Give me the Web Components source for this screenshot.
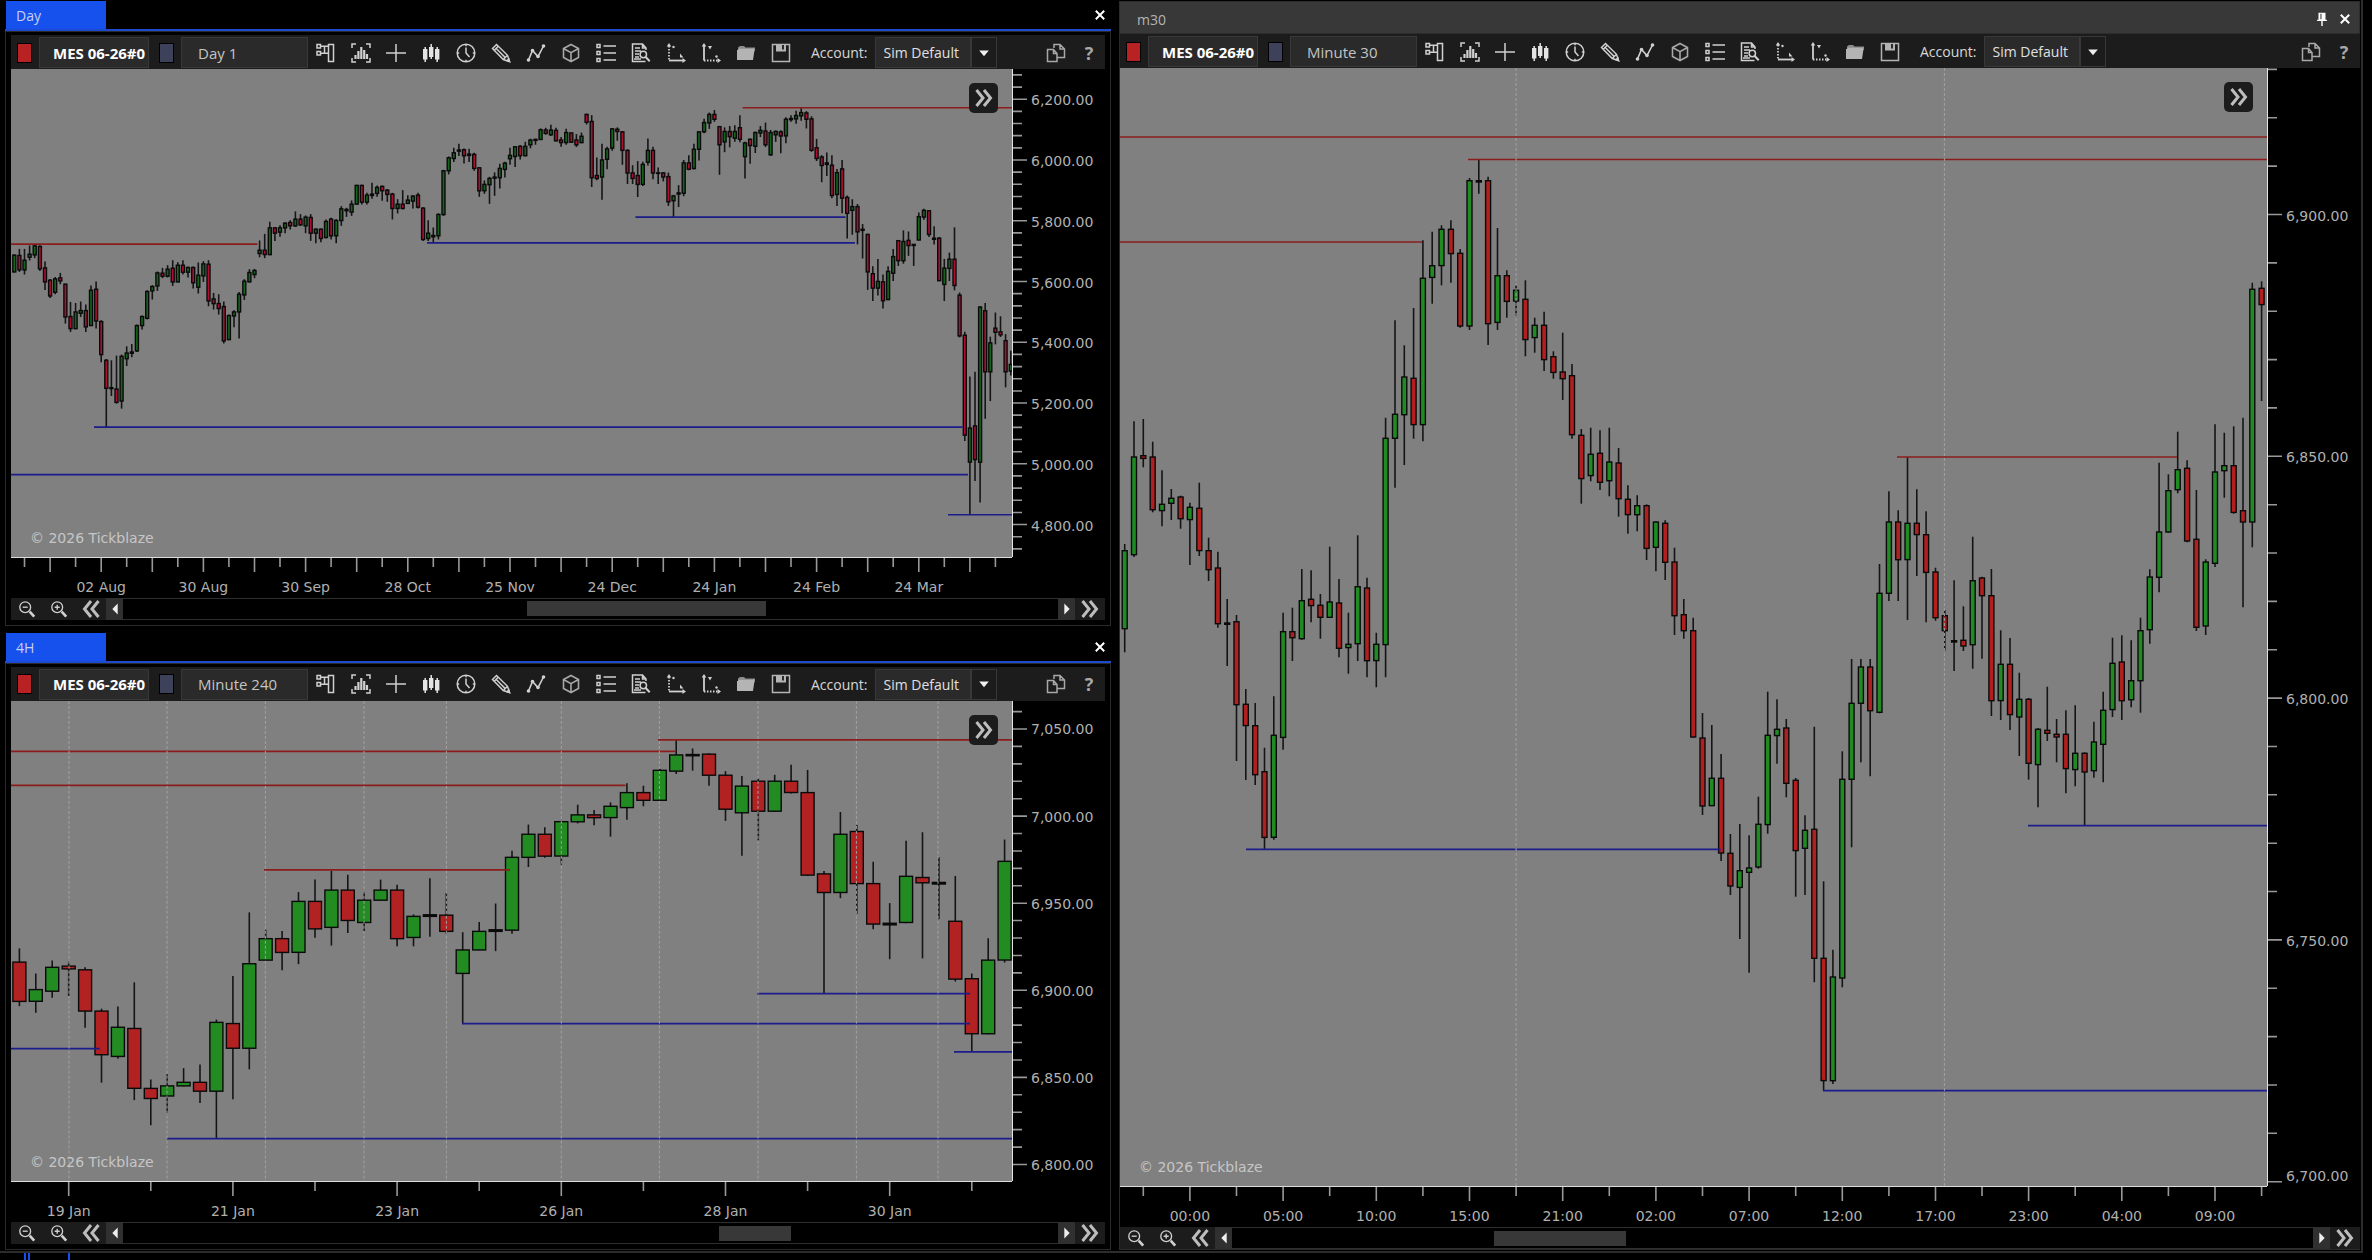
<!DOCTYPE html>
<html lang="en">
<head>
<meta charset="utf-8">
<title>Trading workspace</title>
<style>
html,body{margin:0;height:100%;background:#000;overflow:hidden}
body{font-family:"Open Sans","Noto Sans",sans-serif;color:#d8d8d8}
</style>
</head>
<body>
<trade-workspace>
  <chart-panel slot="left" style="flex-grow:625" variant="tab" heading="Day" period="Day 1" series="day" thumb="239" position="580"></chart-panel>
  <chart-panel slot="left" style="flex-grow:618" variant="tab" heading="4H" period="Minute 240" series="h4" thumb="72" position="691"></chart-panel>
  <chart-panel slot="right" style="flex-grow:1" variant="window" heading="m30" period="Minute 30" series="m30" thumb="132" position="276"></chart-panel>
</trade-workspace>

<script>
const SERIES = {
  day: {
    view: [11, 69, 1001, 487], x0: 14.3, step: 5.11, body: 3, up: '#14641c', down: '#ab0f32',
    runs: [
      [60, 3, `g582,585,635,637 r566,586,629,635 g566,600,629,643 g556,582,591,601 g553,557,584,594 r555,559,626,632 r604,623,665,689 r656,660,707,713 g650,656,696,702 r638,653,662,672
r670,672,770,790 r725,769,805,815 g728,755,805,806 g724,751,759,770 r733,751,800,815 g676,690,796,797 r664,687,782,805 r780,784,883,906 r896,900,984,1100 k900,982,985,1007
r886,986,1026,1030 g883,888,1022,1045 g858,878,895,917 k851,875,879,891 g793,796,872,875 g766,769,796,808 g690,694,774,778 g675,679,692,718 g634,638,677,692 r623,639,648,654
g615,627,648,652 r600,624,665,677 g606,615,665,666 r600,615,636,643 g619,622,636,652 r619,622,668,685 g607,645,681,700 g603,611,647,665 r600,612,722,738 r698,716,730,748
r702,730,745,763 r724,739,842,850 g763,766,838,840 g750,755,767,801 g695,702,755,835 g657,663,704,719 g627,637,665,667 g626,631,643,654 g541,570,580,591 r521,570,583,594
g485,503,583,585 r501,503,519,542 g495,503,516,530 g486,489,503,519 r480,487,497,508 g454,477,497,500 r462,477,494,497 g466,471,497,519 r462,472,519,542 g505,507,519,549
r505,507,535,546 g478,484,532,535 r473,477,527,538 g477,481,527,549 g438,446,481,497 k443,448,452,470 g421,432,456,467 g374,376,432,433 r374,376,426,433 g398,405,426,433
k368,402,406,416 g376,382,400,410 r376,379,392,422 r387,390,403,425 r398,402,445,478 g417,432,445,460 r390,432,445,448 g405,420,430,431 g405,408,423,445 r398,405,441,445
r441,444,538,542 g480,519,535,542 k502,526,530,549 g460,463,527,538 g329,332,463,467 g289,293,332,343 g263,278,295,306 k251,270,273,288 r265,269,287,310 k266,282,286,306
r278,283,325,332 r321,323,392,410 g361,373,392,401 g350,355,374,431 k337,351,354,407 g311,325,353,385 g305,309,328,352 g263,286,296,314 g258,260,289,321 r255,259,287,298
g245,259,287,289 g236,240,254,265 k236,238,241,254 g205,209,238,240 r203,210,220,224 g194,210,224,228`],
      [60, 2.703, `r183,190,218,220 r208,216,223,234 g186,196,223,229 r196,197,222,224 r200,216,229,235 g196,206,223,225 r145,147,168,174 r149,166,318,343 r263,312,320,325 g226,270,316,377
g234,240,268,295 g184,186,238,245 r182,187,193,218 r192,194,244,283 r241,244,305,335 r284,305,320,335 r273,312,336,370 g275,282,336,340 g212,244,276,285 r234,244,305,322
k290,305,306,335 r303,305,316,328 r304,315,383,394 g364,367,380,424 k338,359,362,397 g270,278,360,368 r257,278,295,298 g226,241,293,296 g192,194,241,271 g159,169,194,198
g142,147,170,186 r135,147,160,167 r178,180,229,310 g182,193,221,249 r178,193,207,236 g176,193,211,221 r149,183,214,222 g221,224,261,320 r212,214,231,280 g193,196,233,251
g178,190,197,208 r169,192,229,235 g189,196,256,259 g190,193,202,221 r190,194,205,252 g155,160,205,225 k149,158,161,167 g137,150,159,172 g130,142,151,164 r138,143,160,185
r152,159,244,248 r213,237,266,273 r257,262,285,330 k250,278,282,313 r257,284,366,373 g294,304,363,394 r270,294,373,414 r366,371,414,482 g376,396,406,472 r389,396,464,498
k443,457,460,536 r469,471,572,621 r557,577,616,651 g537,598,616,636 r579,599,650,671 g557,571,647,649 g510,531,576,597 r486,488,542,556 g460,490,542,550 r463,487,501,529
k497,498,501,556 g412,423,486,487 g402,406,424,431 r405,407,471,478 k449,481,484,498 r478,481,596,597 g537,562,606,651 g520,538,563,597 r452,538,609,622 r628,635,745,749
r734,743,1013,1029 g855,994,1086,1228 r842,988,1079,1137 g665,667,1086,1195 r656,677,842,969 g747,764,842,921 r682,724,735,768 r692,734,742,748 r740,758,842,884 g785,822,840,852`]
    ],
    levels: [['r',11,257.5,244],['r',742.6,1012,107.7],['b',94,962.5,426.7],['b',11,968,474.3],['b',427,855,242.7],['b',635.4,845.5,216.9],['b',948,1012,514.3]],
    sessions: [],
    price: { first: 99.2, step: 60.7, minor: 12.14, labels: ['6,200.00','6,000.00','5,800.00','5,600.00','5,400.00','5,200.00','5,000.00','4,800.00'] },
    time: { every: 5, from: 2, longAt: 1, labelFrom: 17, labelEvery: 20, labels: ['02 Aug','30 Aug','30 Sep','28 Oct','25 Nov','24 Dec','24 Jan','24 Feb','24 Mar'] }
  },
  h4: {
    view: [11, 701, 1001, 481], x0: 19.4, step: 16.42, body: 13, up: '#228b22', down: '#b22222',
    runs: [[625, 2.469, `r799,833,930,942 g861,901,930,958 g829,846,905,921 r831,843,850,917 r846,852,954,995 r948,954,1062,1131 g943,994,1066,1072 r883,997,1145,1174 r1123,1145,1170,1236 g1110,1139,1164,1206
g1095,1130,1139,1140 r1086,1130,1152,1181 g975,982,1152,1270 r867,985,1046,1172 g710,837,1046,1098 g753,775,828,830 r756,775,809,853 g660,683,809,838 r629,683,751,773 g607,655,747,792
r617,655,730,761 g659,680,735,757 g629,655,680,682 r642,655,775,794 g715,720,772,794 k626,716,720,770 r661,717,757,763 g759,803,861,985 g734,757,803,804 k688,753,757,806
g558,574,754,763 g493,517,574,598 r500,517,571,575 g484,486,571,592 g444,469,486,490 r457,469,476,495 g438,448,476,523 g391,414,451,481 r397,414,433,448 g355,359,433,435
g284,321,361,368 k305,320,323,360 r317,319,371,397 r361,371,455,484 g373,398,464,570 r379,386,460,532 g370,386,460,462 r345,386,414,416 r358,414,618,620 r608,615,661,911
g462,517,661,675 r494,510,639,714 r585,639,739,752 k687,737,741,826 g533,621,735,737 r512,624,637,824 k574,636,640,727 r620,732,875,881 r861,874,1010,1055 g774,828,1010,1011
g530,584,828,834`]],
    levels: [['r',11,675.5,751.4],['r',11,625.5,785.4],['r',264,510,870],['r',658,1012,740],['b',11,100,1049],['b',167,1012,1139],['b',462,970,1024],['b',757,970,994],['b',954,1012,1052.3]],
    sessions: [69,167,265.4,364,446.4,561.3,659.4,758,856.4,938],
    price: { first: 729, step: 87.2, minor: 17.44, labels: ['7,050.00','7,000.00','6,950.00','6,900.00','6,850.00','6,800.00'] },
    time: { every: 5, from: 3, longAt: 0, labelFrom: 3, labelEvery: 10, labels: ['19 Jan','21 Jan','23 Jan','26 Jan','28 Jan','30 Jan'] }
  },
  m30: {
    view: [1120, 68, 1147, 1118], x0: 1124.7, step: 9.319, body: 5, up: '#1f8b22', down: '#b21f1f',
    runs: [[420, 3, `g372,392,626,697 g4,111,404,411 r-3,107,115,142 r65,111,269,277 g151,253,272,319 g207,235,250,300 r227,231,296,326 g248,262,299,435 r188,265,392,408 r353,392,449,483
r395,444,611,623 k537,609,613,738 r585,605,854,1023 r807,853,917,1080 r849,917,1064,1095 r983,1055,1252,1288 g829,946,1252,1259 g578,635,952,989 r563,635,653,723 g447,542,656,659
r451,538,557,607 r522,556,592,656 g380,546,592,594 r477,549,685,712 g578,673,683,761 g346,500,671,723 r473,504,722,772 g638,673,722,802 g-7,55,674,772 g-299,-17,55,203
g-224,-129,-16,135 r-336,-125,14,56 g-539,-425,14,64 g-565,-463,-428,-349 g-584,-572,-463,-404 r-599,-572,-499,-412 r-513,-500,-282,-277 g-726,-718,-282,-270 k-780,-718,-714,-679 r-730,-718,-289,-225
g-576,-433,-293,-270 r-449,-433,-356,-307 g-404,-389,-357,-312 r-419,-362,-241,-191 g-307,-284,-247,-202 r-325,-284,-181,-147 r-206,-190,-143,-124 r-262,-144,-124,-60 r-168,-133,44,56 r27,46,176,251
g23,103,167,184 r31,100,187,210 g23,126,182,229 r84,129,236,290 r196,238,284,341 g226,257,284,334 r253,257,385,420 g304,306,382,454 r301,310,427,480 r383,426,587,645
r537,584,632,656 r593,632,951,953 r879,954,1158,1185 g915,1075,1157,1159 r1002,1075,1299,1323 r1242,1300,1398,1425 g1212,1352,1402,1557 g1246,1344,1357,1658 g1130,1213,1341,1346 g815,946,1214,1241
g838,928,947,1031 r897,924,1090,1132 r1074,1081,1292,1430 g1186,1231,1285,1425 r920,1228,1615,1687 r1384,1615,1982,2012 g1589,1671,1982,1992 g994,1078,1674,1702 g717,850,1078,1282 g717,741,850,1027
r717,741,872,1069 g432,520,877,880 g214,306,520,543 r271,306,419,543 g112,310,419,600 r208,310,344,468 r274,344,457,607 r443,456,593,602 r570,587,632,692 k481,662,666,753
r559,661,678,693 g350,482,674,746 r470,474,527,716 r447,527,842,888 g631,733,842,900 r654,733,884,930 g758,838,891,1008 r834,838,1030,1079 g924,928,1034,1162 r800,931,940,963
r897,943,951,1027 r871,943,1046,1120 g856,1000,1049,1099 r997,1000,1056,1217 g905,966,1052,1073 g815,871,973,1087 g653,730,869,891 r646,726,842,900 g661,782,839,862 g593,632,782,878
g448,471,629,671 g128,336,472,517 g163,212,336,338 g35,149,209,220 r121,145,363,367 r210,358,622,633 g418,426,618,645 g13,156,430,441 g38,137,152,233 r19,137,277,281
r-7,272,306,562 g-412,-392,306,382 r-416,-395,-346,-57`]],
    levels: [['r',1120,2267,137],['r',1468,2267,159.5],['r',1120,1422,242],['r',1897,2177,457],['b',1246,1720.6,849.3],['b',2028,2267,825.7],['b',1823,2267,1090.7]],
    sessions: [1516.1,1944.4],
    price: { first: 214.5, step: 241.8, minor: 48.36, labels: ['6,900.00','6,850.00','6,800.00','6,750.00','6,700.00'] },
    time: { every: 5, from: 2, longAt: 1, labelFrom: 7, labelEvery: 10, labels: ['00:00','05:00','10:00','15:00','21:00','02:00','07:00','12:00','17:00','23:00','04:00','09:00'] }
  }
};

const ICONS = {
  panel: '<path d="M12.500 1.500h5v17h-5zM1 1.500h3.500V5H1zM1 8.500h3.500V12H1zM4.500 3.200h8M4.500 10.200h8M8.500 3.200v7"/>',
  frame: '<path d="M1 5V1h4M15 1h4v4M19 15v4h-4M5 19H1v-4"/><path stroke-width="2.200" d="M4.500 16v-4M7.400 16V8M10.300 16V4M13.200 16V7M16 16v-5"/>',
  cross: '<path d="M10 1v18M0 10h20"/>',
  candles: '<path fill="#e4e4e4" stroke="none" d="M2 6h4.400v10.500H2zM8 4h4.400v10H8zM14 6h4.400v10.500H14z"/><path stroke="#e4e4e4" d="M4.200 4v15M10.200 1v15M16.200 4v15"/>',
  clock: '<circle cx="10" cy="10" r="8.800"/><path d="M10 4.500V10l3.500 4M10 1.200v2M10 16.800v2M1.200 10h2M16.800 10h2"/>',
  pencil: '<path d="M1.500 5.500 5.500 1.500 16.500 12.300 18.500 18.500 12.300 16.500zM3.200 7.200 7.200 3.200M5 5.200 14.300 14.600M12.300 16.500l4.200-4.200"/><path fill="#d0d0d0" d="m16 17.700 1.800-1.800.7 2.600z"/>',
  zigzag: '<path stroke-width="1.600" d="M2.500 17 6.500 7.500 12 13.500 17.500 3"/><g fill="#d0d0d0" stroke="none"><circle cx="2.500" cy="17" r="1.800"/><circle cx="6.500" cy="7.500" r="1.800"/><circle cx="12" cy="13.500" r="1.800"/><circle cx="17.500" cy="3" r="1.800"/></g>',
  cube: '<path stroke="#a8a8a8" stroke-width="1.600" d="M10 1.500 17.500 5.500v9L10 18.500 2.500 14.500v-9zM2.500 5.500 10 9.700l7.500-4.200M10 9.700v8.800"/>',
  list: '<path d="M1 1.500h3V4.500H1zM1 8.500h3v3H1zM1 15.500h3v3H1zM7.500 3H20M7.500 10H20M7.500 17H20"/>',
  report: '<path d="M15 7V5L11.500 1H1.500v17.500h13M11.500 1v4H15M4 5h5M4 8h6M4 11h4M4 14h4M3 16h7"/><circle cx="12.300" cy="11.500" r="3.200"/><path stroke-width="2" d="m14.700 14 4 4.300"/>',
  axisx: '<path stroke-width="1.800" stroke-dasharray="1.500 1.500" d="M3 3v14"/><path stroke-width="1.800" d="M3 17.500h15"/><g fill="#d0d0d0" stroke="none"><path d="M3 0l2.300 3.500H.700zM20 17.500 16.500 20v-5zM14 10.500l3.500 4h-3.500z"/><circle cx="7.500" cy="4" r="1.200"/></g>',
  axisy: '<path stroke-width="1.800" d="M3 3v14.500"/><path stroke-width="1.800" stroke-dasharray="1.500 1.500" d="M3 17.500h14"/><g fill="#d0d0d0" stroke="none"><path d="M3 0l2.300 3.500H.700zM20 17.500 16.500 20v-5zM7 3h4L9 6.500z"/><circle cx="15.500" cy="13.500" r="1.200"/></g>',
  folder: '<path fill="#8c8c8c" stroke="none" d="M2 4.500 4 3h4l1.500 1.500H19V8H2z"/><path fill="#b4b4b4" stroke="none" d="M1 7h17.500L17 17H1zM3 5.800h14l1-.8v2H2z"/>',
  save: '<path stroke="#b4b4b4" d="M1.500 1.500h17v17h-17z"/><path fill="#b4b4b4" stroke="none" d="M5 1h10v7.500H5z"/><path stroke="#2a2a2a" stroke-width="2" d="M12 2v4.500"/>',
  copy: '<path stroke="#a8a8a8" stroke-width="1.500" d="M8 5V1.500h6L18.500 6v8.500H11M14 1.500V6h4.500M1.500 6.500h6l3.500 4v8H1.500zM7.500 6.500v4H11"/>',
  zoomout: '<circle cx="8" cy="8" r="6"/><path d="M5.200 8h5.600"/><path stroke-width="3" d="m13 13 5 5.500"/>',
  zoomin: '<circle cx="8" cy="8" r="6"/><path d="M5.200 8h5.600M8 5.200v5.600"/><path stroke-width="3" d="m13 13 5 5.500"/>',
  forward: '<path stroke="#bdbdbd" stroke-width="3" d="m2.500 2 6.500 8-6.500 8M10 2l6.500 8-6.500 8"/>',
  back: '<path stroke="#bdbdbd" stroke-width="3" d="m17.500 2-6.500 8 6.500 8M10 2l-6.500 8 6.500 8"/>',
  left: '<path fill="#eee" stroke="none" d="M13 4v12l-6-6z"/>',
  right: '<path fill="#eee" stroke="none" d="M7 4v12l6-6z"/>',
  down: '<path fill="#eee" stroke="none" d="M4 7h12l-6 7z"/>',
  close: '<path stroke="#fff" stroke-width="2.800" d="m4 4 12 12M16 4 4 16"/>',
  pin: '<path fill="#fff" stroke="none" d="M5 1h10v10h2v2h-6v7H9v-7H3v-2h2z"/><path stroke="#383838" d="M8.500 2.500v8"/>'
};

class UiIcon extends HTMLElement {
  connectedCallback() {
    this.attachShadow({ mode: 'open' }).innerHTML = `
      <style>:host{display:block;width:20px;height:20px;flex:none}svg{display:block;width:100%;height:100%;fill:none;stroke:#d0d0d0;stroke-width:1.500}</style>
      <svg viewBox="0 0 20 20" aria-hidden="true">${ICONS[this.getAttribute('name')]}</svg>`;
  }
}

class ChartToolbar extends HTMLElement {
  connectedCallback() {
    const tools = ['panel','frame','cross','candles','clock','pencil','zigzag','cube','list','report','axisx','axisy','folder','save'];
    this.attachShadow({ mode: 'open' }).innerHTML = `
      <style>
        :host{display:flex;align-items:center;height:34px;background:#1c1c1c;flex:none;padding:1px 0 0 6px;box-sizing:border-box}
        *{box-sizing:border-box}
        button{background:none;border:0;padding:0;margin:0;display:flex;align-items:center;justify-content:center;height:32px;width:35px;font:inherit;color:inherit}
        .swatch{width:15px;height:20px;border:1px solid #000;margin-right:7px}
        .red{background:#b82222}.blue{background:#3d415a}
        input{font:15px "Open Sans",sans-serif;height:31px;border:1px solid #383838;background:#2a2a2a;color:#c4c4c4;padding:0 0 0 16px;margin:0;width:127px;outline:0}
        input.symbol{width:110px;padding-left:13px;font-weight:700;color:#fff;margin-right:10px}
        label{font-size:14px;color:#d8d8d8;margin:0 7px 0 13px}
        .combo{display:flex;align-items:center;border:1px solid #383838;height:31px;width:122px;background:#2a2a2a}
        select{appearance:none;border:0;background:none;color:#e0e0e0;font:14px "Open Sans",sans-serif;padding:0 0 0 8px;margin:0;flex:1;height:29px;min-width:0;outline:0}
        .arrow{width:26px;height:29px;background:#1c1c1c;border-left:2px solid #383838;display:flex;align-items:center;justify-content:center}
        .arrow ui-icon{width:16px;height:16px}
        .end{margin-left:auto;display:flex}
        .help{width:32px;font-weight:700;font-size:18px;color:#a8a8a8}
      </style>
      <button class="swatch red" aria-label="Symbol link colour"></button>
      <input class="symbol" value="MES 06-26#0" aria-label="Symbol">
      <button class="swatch blue" aria-label="Interval link colour"></button>
      <input value="${this.getAttribute('period')}" aria-label="Interval">
      ${tools.map(t => `<button aria-label="${t}"><ui-icon name="${t}"></ui-icon></button>`).join('')}
      <label for="account">Account:</label>
      <span class="combo"><select id="account"><option>Sim Default</option></select><span class="arrow"><ui-icon name="down"></ui-icon></span></span>
      <span class="end"><button aria-label="Duplicate"><ui-icon name="copy"></ui-icon></button><button class="help">?</button></span>`;
  }
}

class PriceChart extends HTMLElement {
  connectedCallback() {
    const s = SERIES[this.getAttribute('series')];
    const [vx, vy, vw, vh] = s.view;
    const f = n => n.toFixed(1);
    const ink = { g: s.up, r: s.down, k: '#000' };
    let i = 0, bars = '';
    for (const [top, scale, text] of s.runs) {
      for (const item of text.trim().split(/\s+/)) {
        const x = s.x0 + s.step * i++;
        const [h, t, b, l] = item.slice(1).split(',').map(v => top + v / scale);
        bars += `<path class="w" d="M${f(x)} ${f(h)}V${f(l)}"/><rect x="${f(x - s.body / 2)}" y="${f(t)}" width="${s.body}" height="${f(Math.max(b - t, 0.5))}" fill="${ink[item[0]]}"/>`;
      }
    }
    const lines = s.levels.map(([c, a, b, y]) => `<path class="${c}" d="M${a} ${y}H${b}"/>`).join('');
    const sessions = s.sessions.map(x => `<path class="s" d="M${x} ${vy}V${vy + vh}"/>`).join('');

    let priceTicks = '';
    const up = Math.floor((s.price.first - vy) / s.price.minor);
    for (let n = -up; ; n++) {
      const y = s.price.first + n * s.price.minor;
      if (y > vy + vh) break;
      priceTicks += `M0 ${f(y)}h${n % 5 === 0 ? 14 : 9}`;
    }
    let timeTicks = '';
    for (let n = 0, k = s.time.from; k < i; n++, k += s.time.every) {
      timeTicks += `M${f(s.x0 + s.step * k)} 0v${n % 2 === s.time.longAt ? 14 : 9}`;
    }
    const tracks = (positions, size, total) => {
      let out = '', at = 0;
      for (const p of positions) {
        out += `minmax(0,${f(Math.max(p - size / 2 - at, 0))}fr) ${size}px `;
        at = Math.max(at, p - size / 2) + size;
      }
      return out + `minmax(0,${f(Math.max(total - at, 0))}fr)`;
    };
    const py = s.price.labels.map((_, n) => Math.min(s.price.first + n * s.price.step - vy + 1, vh - 10));
    const px = s.time.labels.map((_, n) => s.x0 + s.step * (s.time.labelFrom + n * s.time.labelEvery) - vx);
    const spans = (list, axis) => list.map((t, n) => `<span style="grid-${axis}:${n * 2 + 2}">${t}</span>`).join('');

    this.attachShadow({ mode: 'open' }).innerHTML = `
      <style>
        :host{display:grid;grid-template-columns:minmax(0,1fr) 93px;grid-template-rows:minmax(0,1fr) 41px;flex:1;min-height:0;font:14px/20px "DejaVu Sans",sans-serif;color:#b0b0b0;background:#000}
        .plot{position:relative;background:#808080;min-height:0;overflow:hidden}
        svg{display:block}
        .plot svg{width:100%;height:100%}
        .plot rect{stroke:#0a0a0a;stroke-width:1.400}
        .w{stroke:#151515;stroke-width:1.600}
        .r{stroke:#8b1c1c;stroke-width:1.700}
        .b{stroke:#1c1c8b;stroke-width:1.700}
        .s{stroke:#a2a2a2;stroke-width:1;stroke-dasharray:3 2}
        .mark{position:absolute;left:19px;bottom:9px;color:#c6c6c6}
        .jump{position:absolute;right:14px;top:14px;width:29px;height:30px;border:0;border-radius:5px;background:#1c1c1c;padding:0;display:flex;align-items:center;justify-content:center}
        .price{display:flex;gap:4px;border-left:2px solid #e4e4e4;min-height:0;margin-left:-1px}
        .price svg{width:14px;height:100%;flex:none}
        .tick{stroke:#989898;stroke-width:1.600;fill:none}
        .ylabels{display:grid;grid-template-rows:${tracks(py, 20, vh)}}
        .time{border-top:2px solid #dcdcdc;margin-top:-1px}
        .time svg{width:100%;height:14px}
        .xlabels{display:grid;grid-template-columns:${tracks(px, 64, vw)};text-align:center;margin-top:5px}
        span{white-space:nowrap}
      </style>
      <div class="plot">
        <svg viewBox="${s.view.join(' ')}" preserveAspectRatio="none">${bars}${lines}${sessions}</svg>
        <span class="mark">© 2026 Tickblaze</span>
        <button class="jump" aria-label="Jump to latest bar"><ui-icon name="forward"></ui-icon></button>
      </div>
      <div class="price">
        <svg viewBox="0 ${vy} 14 ${vh}" preserveAspectRatio="none"><path class="tick" d="${priceTicks}"/></svg>
        <div class="ylabels">${spans(s.price.labels, 'row')}</div>
      </div>
      <div class="time">
        <svg viewBox="${vx} 0 ${vw} 14" preserveAspectRatio="none"><path class="tick" d="${timeTicks}"/></svg>
        <div class="xlabels">${spans(s.time.labels, 'column')}</div>
      </div>`;
  }
}

class ChartScroller extends HTMLElement {
  connectedCallback() {
    this.attachShadow({ mode: 'open' }).innerHTML = `
      <style>
        :host{display:flex;height:22px;background:#1c1c1c;flex:none;align-items:stretch}
        *{box-sizing:border-box}
        button{border:0;padding:0;margin:0;background:none;width:32px;display:flex;align-items:center;justify-content:center;flex:none}
        .zoom ui-icon{width:18px;height:18px}
        .step{width:17px;background:#303030}
        .step ui-icon{width:18px;height:18px}
        .first{width:31px}
        .last{width:30px}
        input{appearance:none;flex:1;min-width:0;margin:0;height:22px;background:#000;border:1px solid #2e2e2e;border-width:1px 0;outline:0}
        input::-webkit-slider-thumb{appearance:none;width:${this.getAttribute('thumb')}px;height:15px;background:#383838;border:0;border-radius:0}
      </style>
      <button class="zoom" aria-label="Zoom out"><ui-icon name="zoomout"></ui-icon></button>
      <button class="zoom" aria-label="Zoom in"><ui-icon name="zoomin"></ui-icon></button>
      <button class="first" aria-label="First bar"><ui-icon name="back"></ui-icon></button>
      <button class="step" aria-label="Scroll left"><ui-icon name="left"></ui-icon></button>
      <input type="range" min="0" max="1000" value="${this.getAttribute('position')}" aria-label="Scroll chart">
      <button class="step" aria-label="Scroll right"><ui-icon name="right"></ui-icon></button>
      <button class="last" aria-label="Last bar"><ui-icon name="forward"></ui-icon></button>`;
  }
}

class ChartPanel extends HTMLElement {
  connectedCallback() {
    const a = n => this.getAttribute(n);
    const pin = a('variant') === 'window' ? '<button aria-label="Pin"><ui-icon class="pin" name="pin"></ui-icon></button>' : '';
    this.attachShadow({ mode: 'open' }).innerHTML = `
      <style>
        :host{display:flex;flex-direction:column;flex-basis:0;min-height:0}
        *{box-sizing:border-box}
        header{display:flex;justify-content:space-between;align-items:stretch;flex:none;font-size:14px}
        .actions{display:flex;align-items:center}
        button{border:0;background:none;padding:0;margin:0;width:23px;height:24px;display:flex;align-items:center;justify-content:center}
        ui-icon{width:14px;height:14px}
        .body{display:flex;flex-direction:column;flex:1;min-height:0;border:1px solid #2a2a2a}
        :host([variant=tab]) header{height:30px;border-bottom:2px solid #1d4bd0}
        :host([variant=tab]) h2{background:#1651ee;color:#c6d0ee;width:100px;margin:0 0 0 1px;padding:0 0 0 10px;line-height:29px}
        :host([variant=tab]) .body{padding:3px 5px 5px}
        :host([variant=window]) header{height:33px;background:#383838;border:1px solid #2c2c2c}
        :host([variant=window]) h2{color:#b4b4b4;margin:0;padding:3px 0 0 17px;line-height:30px}
        :host([variant=window]) .actions{padding:3px 3px 0 0}
        :host([variant=window]) .body{border-width:0 0 1px 1px}
        h2{font-size:14px;font-weight:400}
      </style>
      <header><h2>${a('heading')}</h2><div class="actions">${pin}<button aria-label="Close"><ui-icon name="close"></ui-icon></button></div></header>
      <div class="body">
        <chart-toolbar period="${a('period')}"></chart-toolbar>
        <price-chart series="${a('series')}"></price-chart>
        <chart-scroller thumb="${a('thumb')}" position="${a('position')}"></chart-scroller>
      </div>`;
  }
}

class TradeWorkspace extends HTMLElement {
  connectedCallback() {
    this.attachShadow({ mode: 'open' }).innerHTML = `
      <style>
        :host{display:flex;flex-direction:column;height:100vh;background:#000}
        .frame{flex:1;min-height:0;display:grid;grid-template-columns:minmax(0,1106fr) minmax(0,1241fr);gap:8px;margin-right:9px;padding:1px 1px 1px 5px;border:solid #2c2c2c;border-width:0 2px 2px 0}
        .col{display:flex;flex-direction:column;gap:7px;min-height:0}
        footer{height:7px;flex:none;display:flex;gap:2px;padding-left:24px}
        i{width:2px;background:#1651ee}
        i:last-child{margin-left:36px}
      </style>
      <div class="frame"><div class="col"><slot name="left"></slot></div><div class="col"><slot name="right"></slot></div></div>
      <footer><i></i><i></i><i></i></footer>`;
  }
}

customElements.define('ui-icon', UiIcon);
customElements.define('chart-toolbar', ChartToolbar);
customElements.define('price-chart', PriceChart);
customElements.define('chart-scroller', ChartScroller);
customElements.define('chart-panel', ChartPanel);
customElements.define('trade-workspace', TradeWorkspace);
</script>
</body>
</html>
